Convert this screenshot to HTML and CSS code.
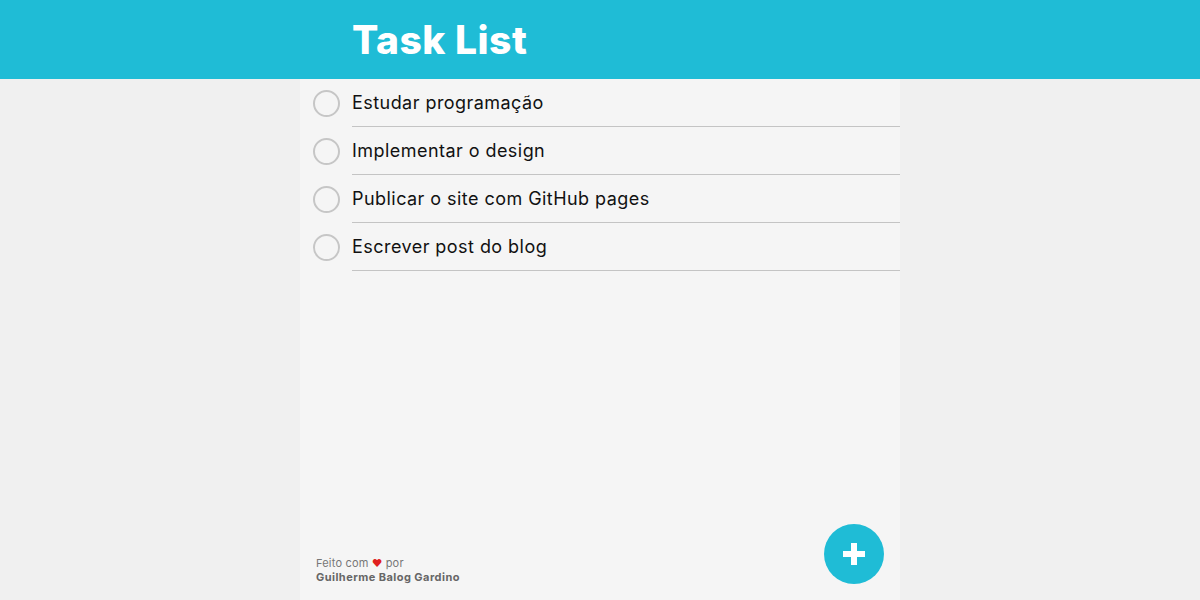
FILE: index.html
```html
<!DOCTYPE html>
<html lang="pt-BR">
<head>
<meta charset="utf-8">
<title>Task List</title>
<link rel="stylesheet" href="styles.css">
</head>
<body>
<header class="header">
  <div class="header-inner">
    <h1 class="title">Task List</h1>
  </div>
</header>
<main class="app">
  <ul class="tasks">
    <li class="task"><span class="check"></span><span class="task-text">Estudar programação</span></li>
    <li class="task"><span class="check"></span><span class="task-text">Implementar o design</span></li>
    <li class="task"><span class="check"></span><span class="task-text">Publicar o site com GitHub pages</span></li>
    <li class="task"><span class="check"></span><span class="task-text">Escrever post do blog</span></li>
  </ul>
  <footer class="footer">
    <div class="credits">
      <div class="made">Feito com <span class="heart">♥</span> por</div>
      <div class="author">Guilherme Balog Gardino</div>
    </div>
    <button class="fab" aria-label="Adicionar">
      <svg width="22" height="22" viewBox="0 0 22 22"><rect x="8" y="0" width="6" height="22" fill="#fff"/><rect x="0" y="8" width="22" height="6" fill="#fff"/></svg>
    </button>
  </footer>
</main>
</body>
</html>
```

FILE: styles.css
```css
* { box-sizing: border-box; }
html, body { margin: 0; padding: 0; height: 100%; }
body {
  background: #f0f0f0;
  font-family: Inter, "Noto Sans", sans-serif;
  color: #111;
  display: flex;
  flex-direction: column;
}
.header {
  background: #1fbcd6;
  height: 79px;
  flex: none;
}
.header-inner {
  width: 600px;
  margin: 0 auto;
  height: 100%;
  display: flex;
  align-items: center;
  padding-left: 52px;
}
.title {
  margin: 0;
  color: #fff;
  font-size: 39px;
  font-weight: 800;
  letter-spacing: 0.5px;
}
.app {
  width: 600px;
  margin: 0 auto;
  flex: 1;
  background: #f5f5f5;
  display: flex;
  flex-direction: column;
}
.tasks {
  list-style: none;
  margin: 0;
  padding: 0;
  flex: 1;
}
.task {
  display: flex;
  align-items: center;
  height: 48px;
  padding-left: 13px;
}
.check {
  width: 27px;
  height: 27px;
  border: 2px solid #c6c6c6;
  border-radius: 50%;
  flex: none;
  margin-right: 12px;
}
.task-text {
  flex: 1;
  height: 100%;
  display: flex;
  align-items: center;
  border-bottom: 1px solid #c4c4c4;
  font-size: 18px;
  letter-spacing: 0.45px;
}
.footer {
  display: flex;
  align-items: flex-end;
  justify-content: space-between;
  padding: 0 16px 16px 16px;
}
.credits {
  font-size: 11px;
  line-height: 14px;
  color: #777;
  letter-spacing: 0.2px;
}
.heart { color: #e02020; font-size: 10px; }
.author { font-weight: 700; color: #666; letter-spacing: 0.45px; }
.fab {
  width: 60px;
  height: 60px;
  border-radius: 50%;
  border: none;
  background: #1fbcd6;
  display: flex;
  align-items: center;
  justify-content: center;
  padding: 0;
}
```
